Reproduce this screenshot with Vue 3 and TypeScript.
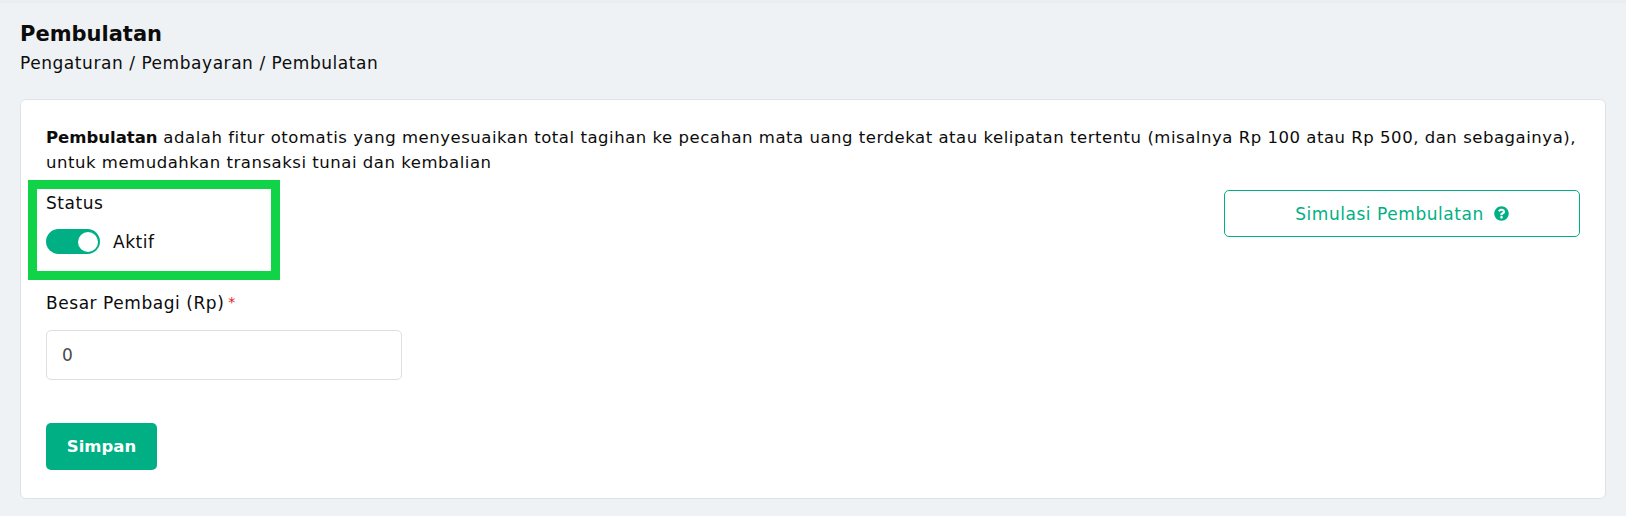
<script setup lang="ts">
import { ref } from 'vue'

const aktif = ref(true)
const pembagi = ref('0')
</script>

<template>
  <main class="page">
    <header class="page-header">
      <h1 class="page-title">Pembulatan</h1>
      <p class="breadcrumb">Pengaturan / Pembayaran / Pembulatan</p>
    </header>

    <section class="card">
      <p class="intro">
        <strong>Pembulatan</strong> adalah fitur otomatis yang menyesuaikan total tagihan ke pecahan mata uang terdekat atau kelipatan tertentu (misalnya Rp 100 atau Rp 500, dan sebagainya), untuk memudahkan transaksi tunai dan kembalian
      </p>

      <div class="status-row">
        <div class="status-field">
          <span class="field-label">Status</span>
          <label class="switch-line">
            <button
              class="switch"
              :class="{ 'switch--on': aktif }"
              type="button"
              aria-label="Status"
              @click="aktif = !aktif"
            >
              <span class="switch-knob"></span>
            </button>
            <span class="switch-text">{{ aktif ? 'Aktif' : 'Nonaktif' }}</span>
          </label>
          <span class="highlight" aria-hidden="true"></span>
        </div>

        <button class="simulate" type="button">
          Simulasi Pembulatan
          <svg class="simulate-icon" viewBox="0 0 512 512" aria-hidden="true">
            <path
              fill="currentColor"
              d="M504 256c0 137-111 248-248 248S8 393 8 256 119 8 256 8s248 111 248 248zM262.700 90c-54.500 0-89.300 23-116.500 63.800-3.500 5.300-2.400 12.400 2.700 16.300l34.700 26.300c5.200 3.900 12.600 3 16.700-2.100 17.900-22.700 30.100-35.800 57.300-35.800 20.400 0 45.700 13.100 45.700 32.900 0 15-12.400 22.700-32.500 34-23.500 13.200-54.600 29.600-54.600 70.600V300c0 6.600 5.400 12 12 12h56c6.600 0 12-5.400 12-12v-1.300c0-28.400 83-29.600 83-106.700 0-58-60.200-102-116.500-102zM256 338c-25.400 0-46 20.600-46 46s20.600 46 46 46 46-20.600 46-46-20.600-46-46-46z"
            />
          </svg>
        </button>
      </div>

      <label class="amount-field">
        <span class="field-label">Besar Pembagi (Rp)<em class="required">*</em></span>
        <input v-model="pembagi" class="amount-input" type="text" />
      </label>

      <button class="save" type="button">Simpan</button>
    </section>
  </main>
</template>

<style>
html,
body {
  margin: 0;
  background: #eff2f5;
}
</style>

<style scoped>
.page {
  box-sizing: border-box;
  height: 516px;
  padding: 18px 20px 18px;
  border-top: 3px solid #ebedf0;
  background: #eff2f5;
  color: #0c0c0c;
  font-family: "DejaVu Sans", "Noto Sans", sans-serif;
  font-size: 17px;
  letter-spacing: 0.55px;
  overflow: hidden;
}

.page-title {
  margin: 0;
  font-size: 21px;
  font-weight: 700;
  letter-spacing: 0;
  line-height: 27px;
}

.breadcrumb {
  margin: 3px 0 0;
  font-size: 17px;
  line-height: 24px;
}

.card {
  display: flex;
  flex-direction: column;
  align-items: flex-start;
  box-sizing: border-box;
  height: 400px;
  margin-top: 24px;
  padding: 25px 25px 0;
  border: 1px solid #dfe3e8;
  border-radius: 6px;
  background: #fff;
}

.intro {
  margin: 0;
  font-size: 16.500px;
  letter-spacing: 0.53px;
  line-height: 25px;
}

.intro strong {
  font-weight: 700;
  letter-spacing: 0;
}

.status-row {
  display: flex;
  justify-content: space-between;
  align-items: flex-start;
  align-self: stretch;
  margin-top: 16px;
}

.status-field {
  position: relative;
  display: flex;
  flex-direction: column;
  gap: 14px;
}

.field-label {
  line-height: 24px;
}

.required {
  margin-left: 4px;
  color: #e02020;
  font-size: 14px;
  font-style: normal;
  vertical-align: 2px;
}

.switch-line {
  display: flex;
  align-items: center;
  gap: 13px;
}

.switch {
  display: flex;
  align-items: center;
  justify-content: flex-end;
  box-sizing: border-box;
  width: 54px;
  height: 25px;
  padding: 0 2px;
  border: none;
  border-radius: 999px;
  background: #00b084;
  cursor: pointer;
}

.switch-knob {
  width: 20px;
  height: 20px;
  border-radius: 50%;
  background: #fff;
}

.switch-text {
  line-height: 24px;
}

.highlight {
  position: absolute;
  top: -11px;
  left: -18px;
  width: 234px;
  height: 82px;
  border: 9px solid #10d348;
  pointer-events: none;
}

.simulate {
  display: flex;
  align-items: center;
  justify-content: center;
  gap: 10px;
  box-sizing: border-box;
  width: 356px;
  height: 47px;
  margin-top: -1px;
  border: 1px solid #00b084;
  border-radius: 5px;
  background: #fff;
  color: #00b084;
  font: inherit;
  letter-spacing: inherit;
  cursor: pointer;
}

.simulate-icon {
  width: 15px;
  height: 15px;
}

.amount-field {
  display: flex;
  flex-direction: column;
  gap: 15px;
  margin-top: 36px;
}

.amount-input {
  box-sizing: border-box;
  width: 356px;
  height: 50px;
  padding: 0 15px;
  border: 1px solid #dcdfe3;
  border-radius: 5px;
  color: #4a4a4a;
  font: inherit;
  outline: none;
}

.save {
  width: 111px;
  height: 47px;
  margin-top: 43px;
  border: none;
  border-radius: 5px;
  background: #00b084;
  color: #fff;
  font: inherit;
  font-size: 16.500px;
  font-weight: 700;
  letter-spacing: 0;
  cursor: pointer;
}
</style>
